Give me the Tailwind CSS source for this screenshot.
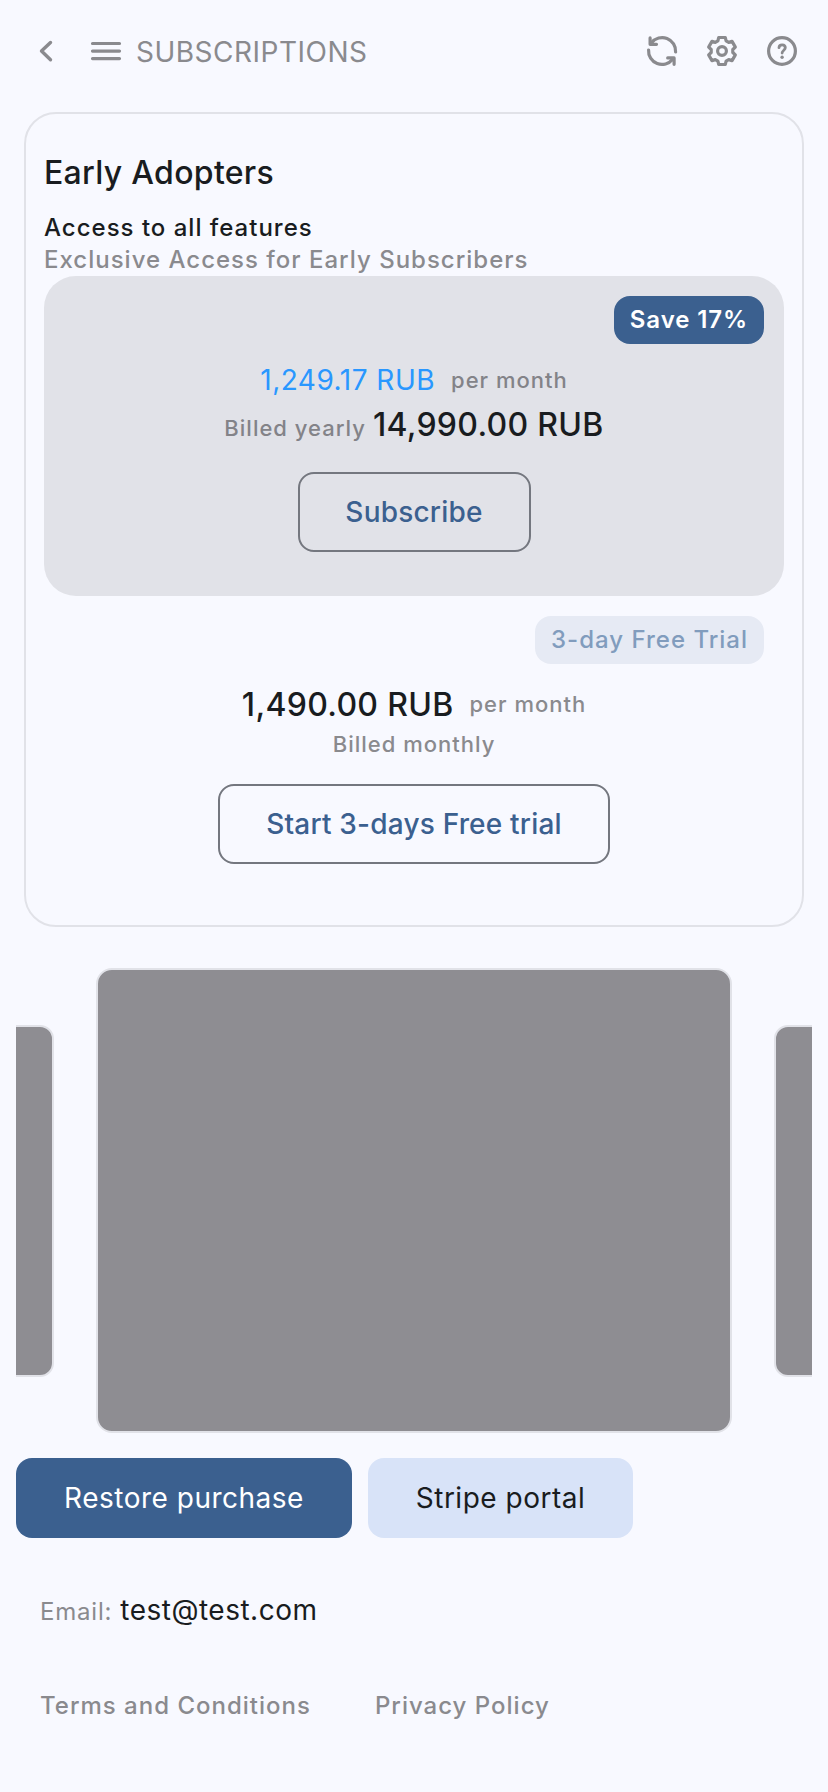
<!DOCTYPE html>
<html lang="en">
<head>
<meta charset="utf-8">
<title>Subscriptions</title>
<script src="https://cdn.jsdelivr.net/npm/@tailwindcss/browser@4"></script>
</head>
<body class="w-[828px] h-[1792px] overflow-hidden bg-[#f8f9ff] font-[Inter,sans-serif] text-[#191c20] whitespace-nowrap">
  <header class="h-[112px] pt-[35px] pl-[30px] pr-[30px] flex items-start text-[#8a8a8e]">
    <svg class="w-8 h-8" viewBox="0 0 32 32" fill="none" stroke="currentColor" stroke-width="3.4" stroke-linecap="round" stroke-linejoin="round"><path d="M20.5 7.5 11.5 16l9 8.7"/></svg>
    <svg class="w-8 h-8 ml-7" viewBox="0 0 32 32" fill="none" stroke="currentColor" stroke-width="3.2" stroke-linecap="round"><path d="M2.5 8.5h27M2.5 16.1h27M2.5 23.6h27"/></svg>
    <h1 class="ml-[14px] text-[28px] leading-[34px] tracking-[0.5px]">SUBSCRIPTIONS</h1>
    <div class="ml-auto flex gap-7">
      <svg class="w-8 h-8" viewBox="0 0 32 32" fill="none" stroke="currentColor" stroke-width="3.2" stroke-linecap="round" stroke-linejoin="round"><path d="M5.6 7.8A13.4 13.4 0 0 1 29.6 17M2.6 15A13.4 13.4 0 0 0 26.6 24.2"/><path d="M4.1 2.9V9.3H10.5M28.1 29.3V22.9H21.7"/><path d="M4.1 5.5 8 9.3H4.1ZM28.1 26.7 24.2 22.9H28.1Z" fill="currentColor" stroke-width="1.5"/></svg>
      <svg class="w-8 h-8" viewBox="0 0 32 32" fill="none" stroke="currentColor" stroke-width="3.2" stroke-linejoin="round"><path d="M12.7 2.5H19.3L20.1 5.9 22.7 7.4 26.05 6.4 29.34 12.1 26.8 14.5V17.5L29.34 19.9 26.05 25.6 22.7 24.6 20.1 26.1 19.3 29.5H12.7L11.9 26.1 9.3 24.6 5.95 25.6 2.66 19.9 5.2 17.5V14.5L2.66 12.1 5.95 6.4 9.3 7.4 11.9 5.9Z"/><circle cx="16" cy="16" r="4.4"/></svg>
      <svg class="w-8 h-8" viewBox="0 0 32 32" fill="none" stroke="currentColor" stroke-width="3.2" stroke-linecap="round" stroke-linejoin="round"><circle cx="16" cy="16" r="13.4"/><path d="M13 12.7C13.2 8.8 19.3 9 19.3 12.8 19.3 15.3 16.1 15.2 16.1 18.1" stroke-width="2.8"/><circle cx="16.1" cy="22.3" r="1.7" fill="currentColor" stroke="none"/></svg>
    </div>
  </header>

  <main>
    <section class="mx-6 h-[815px] border-2 border-[#e1e2e8] rounded-[32px] px-[18px] pt-[39px]">
      <h2 class="text-[32px] leading-10 font-medium tracking-[0.3px]">Early Adopters</h2>
      <p class="mt-[19px] text-2xl leading-8 font-medium tracking-[1px]">Access to all features</p>
      <p class="text-2xl leading-8 font-medium tracking-[1px] text-[#8a8a8e]">Exclusive Access for Early Subscribers</p>

      <div class="h-[320px] bg-[#e1e2e8] rounded-[32px] pt-5 flex flex-col items-center">
        <span class="self-end mr-5 h-12 px-4 rounded-2xl bg-[#3b608f] text-white text-2xl leading-[47px] font-semibold tracking-[0.9px]">Save 17%</span>
        <div class="mt-4 h-10 flex items-center gap-4">
          <span class="text-[28px] leading-10 tracking-[0.5px] text-[#2997ff]">1,249.17 RUB</span>
          <span class="text-[22px] leading-10 font-medium tracking-[1px] text-[#838388]">per month</span>
        </div>
        <div class="mt-[5px] h-10 flex items-baseline gap-[7px]">
          <span class="text-[22px] leading-10 font-medium tracking-[1px] text-[#838388]">Billed yearly</span>
          <span class="text-[32px] leading-10 font-medium tracking-[0.3px]">14,990.00 RUB</span>
        </div>
        <button class="mt-[27px] h-20 w-[233px] border-2 border-[#74777f] rounded-2xl text-[28px] font-medium tracking-[0.2px] text-[#3b608f]">Subscribe</button>
      </div>

      <div class="pt-5 flex flex-col items-center">
        <span class="self-end mr-5 h-12 px-4 rounded-2xl bg-[#e6eaf4] text-[#819cbd] text-2xl leading-[47px] font-medium tracking-[1px]">3-day Free Trial</span>
        <div class="mt-5 h-10 flex items-center gap-4">
          <span class="pt-0.5 text-[32px] leading-10 font-medium tracking-[0.3px]">1,490.00 RUB</span>
          <span class="text-[22px] leading-10 font-medium tracking-[1px] text-[#8a8a8e]">per month</span>
        </div>
        <span class="mt-1 text-[22px] leading-8 font-medium tracking-[1px] text-[#8a8a8e]">Billed monthly</span>
        <button class="mt-6 h-20 w-[392px] border-2 border-[#74777f] rounded-2xl text-[28px] font-medium tracking-[0.2px] text-[#3b608f]">Start 3-days Free trial</button>
      </div>
    </section>

    <section class="mx-4 mt-[41px] h-[465px] overflow-hidden flex items-center justify-center gap-[42px]">
      <div class="shrink-0 w-[482px] h-[352px] rounded-[14px] border-2 border-[#e1e2e8] bg-[#8e8d92]"></div>
      <div class="shrink-0 w-[636px] h-[465px] rounded-2xl border-2 border-[#e1e2e8] bg-[#8e8d92]"></div>
      <div class="shrink-0 w-[482px] h-[352px] rounded-[14px] border-2 border-[#e1e2e8] bg-[#8e8d92]"></div>
    </section>

    <div class="mt-[25px] ml-4 flex gap-4">
      <button class="h-20 w-[336px] rounded-2xl bg-[#3b608f] text-white text-[28px] tracking-[0.5px]">Restore purchase</button>
      <button class="h-20 w-[265px] rounded-2xl bg-[#d8e3f8] text-[28px] tracking-[0.5px]">Stripe portal</button>
    </div>
  </main>

  <footer class="mt-[52px] ml-10">
    <p class="h-10 flex items-baseline gap-2"><span class="text-2xl leading-10 tracking-[0.8px] text-[#8a8a8e]">Email:</span><span class="text-[28px] leading-10 tracking-[0.5px]">test@test.com</span></p>
    <nav class="mt-14 flex gap-16 text-2xl leading-10 font-medium tracking-[1px] text-[#8a8a8e]"><a>Terms and Conditions</a><a>Privacy Policy</a></nav>
  </footer>
</body>
</html>
